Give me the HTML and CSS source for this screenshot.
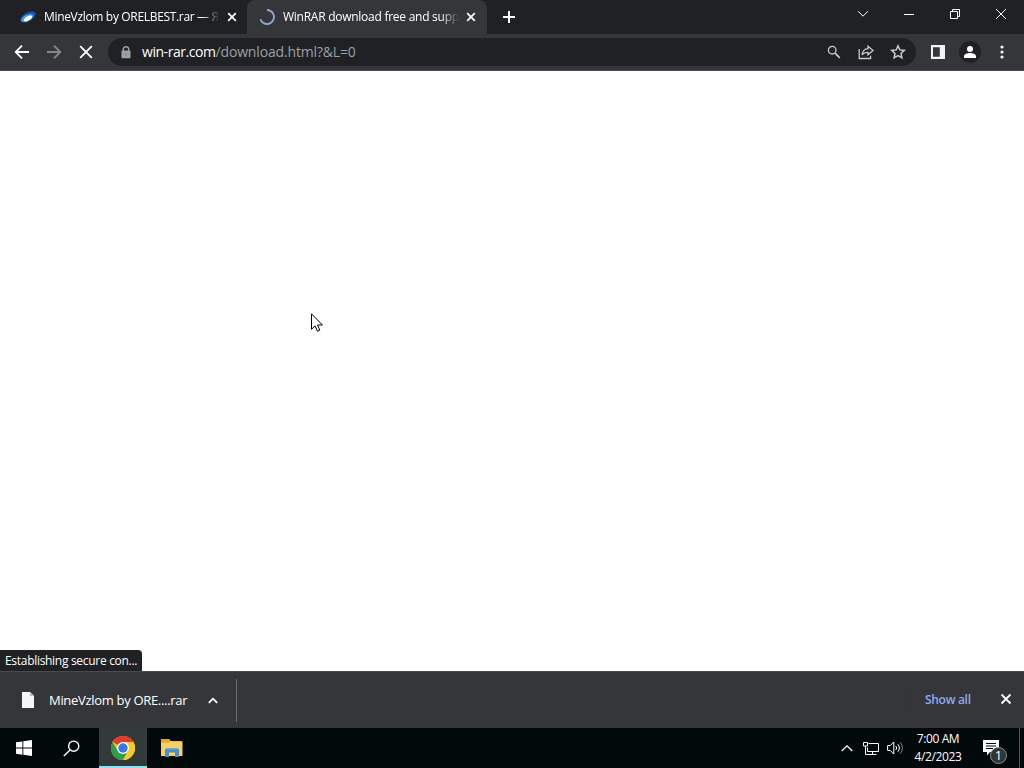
FILE: index.html
```html
<!DOCTYPE html>
<html lang="en">
<head>
  <meta charset="UTF-8">
  <meta name="viewport" content="width=device-width, initial-scale=1.0">
  <title>WinRAR download free and support</title>
  <link rel="stylesheet" href="styles.css">
</head>
<body>

  <div class="tabstrip">
    <div class="tab">
      <svg class="favicon" width="16" height="16" viewBox="0 0 16 16">
        <ellipse cx="8" cy="8" rx="8.3" ry="4.2" fill="#1557b8" transform="rotate(-28 8 8)"/>
        <ellipse cx="7.2" cy="9" rx="6.5" ry="3" fill="#4ba3f5" transform="rotate(-28 7.2 9)"/>
        <ellipse cx="8" cy="9.5" rx="4.6" ry="2" fill="#fff" transform="rotate(-30 8 9.5)"/>
      </svg>
      <span class="tab-title first-title">MineVzlom by ORELBEST.rar — Я</span>
      <svg class="tab-close" width="10" height="10" viewBox="0 0 10 10"><path d="M1.2 1.2l7.6 7.6M8.8 1.2L1.2 8.8"/></svg>
    </div>
    <div class="tab active">
      <svg class="favicon" width="16" height="16" viewBox="0 0 16 16">
        <path d="M8 1a7 7 0 1 1-6.6 9.3" fill="none" stroke="#8ea9d8" stroke-width="1.9"/>
      </svg>
      <span class="tab-title second-title">WinRAR download free and supp</span>
      <svg class="tab-close" width="10" height="10" viewBox="0 0 10 10"><path d="M1.2 1.2l7.6 7.6M8.8 1.2L1.2 8.8"/></svg>
    </div>
    <svg class="new-tab" width="12" height="12" viewBox="0 0 12 12"><path d="M6 0v12M0 6h12"/></svg>
    <div class="window-buttons">
      <div><svg width="12" height="8" viewBox="0 0 12 8"><path d="M1 1.2l5 5 5-5"/></svg></div>
      <div><svg width="10" height="10" viewBox="0 0 10 10"><path d="M0 5.5h10"/></svg></div>
      <div><svg width="10" height="10" viewBox="0 0 10 10"><path d="M.5 2.5h7v7h-7zM2.5 2.5v-2h7v7h-2"/></svg></div>
      <div><svg width="12" height="12" viewBox="0 0 12 12"><path d="M1 1l10 10M11 1L1 11"/></svg></div>
    </div>
  </div>

  <div class="toolbar">
    <div class="nav">
      <svg width="16" height="16" viewBox="0 0 16 16"><path d="M15 8H2M8 1.7L1.7 8 8 14.3"/></svg>
      <svg class="disabled" width="16" height="16" viewBox="0 0 16 16"><path d="M1 8h13M8 1.7L14.3 8 8 14.3"/></svg>
      <svg width="16" height="16" viewBox="0 0 16 16"><path d="M2.2 2.2l11.6 11.6M13.8 2.2L2.2 13.8"/></svg>
    </div>
    <div class="omnibox">
      <svg class="lock" width="10" height="13" viewBox="0 0 10 13">
        <path d="M2.2 5V3.6a2.8 2.8 0 0 1 5.6 0V5" fill="none" stroke="#9aa0a6" stroke-width="1.4"/>
        <rect x="0.5" y="4.6" width="9" height="7.6" rx="1" fill="#9aa0a6"/>
        <circle cx="5" cy="8.4" r="1" fill="#85878b"/>
      </svg>
      <div class="url"><span class="host">win-rar.com</span><span class="path">/download.html?&amp;L=0</span></div>
      <div class="omnibox-icons">
        <svg width="16" height="16" viewBox="0 0 16 16"><circle cx="6.2" cy="6.2" r="3.8"/><path d="M9.1 9.1l4.700 4.700" stroke-width="1.700"/></svg>
        <svg width="16" height="16" viewBox="0 0 16 16"><path d="M1.200 5v9.500h11.400v-2.700M10 2.200l5 4.300-5 4.300V8.300c-3.100 0-4.700.8-6 2.600.5-3.500 2.500-5.900 6-6.200z"/></svg>
        <svg width="16" height="16" viewBox="0 0 16 16"><path stroke-width="1.500" d="M8 1.900l1.800 4 4.500.5-3.300 3 .9 4.400L8 11.500l-3.900 2.300.9-4.400-3.300-3 4.500-.5z"/></svg>
      </div>
    </div>
    <div class="toolbar-icons">
      <svg width="14" height="14" viewBox="0 0 14 14"><path fill="#f1f3f4" fill-rule="evenodd" d="M0 0h14v14H0zM2 2.200v9.600h6.800V2.200z"/></svg>
      <svg width="22" height="22" viewBox="0 0 22 22"><circle cx="11" cy="11" r="11" fill="#202124"/><circle cx="11" cy="8" r="3" fill="#fff"/><path d="M5 17v-1.700C5 13 8.500 12 11 12s6 1 6 3.300V17z" fill="#fff"/></svg>
      <svg width="4" height="14" viewBox="0 0 4 14" fill="#f1f3f4"><circle cx="2" cy="2" r="1.600"/><circle cx="2" cy="7" r="1.600"/><circle cx="2" cy="12" r="1.600"/></svg>
    </div>
  </div>

  <div class="page">
    <div class="status">Establishing secure con...</div>
    <svg class="cursor" width="13" height="20" viewBox="0 0 13 20">
      <path d="M.5.8v15.500l3.600-3.400 2.300 5.300 2.400-1-2.300-5.200h4.900z" fill="#fff" stroke="#000"/>
    </svg>
  </div>

  <div class="shelf">
    <div class="download">
      <svg width="12" height="16" viewBox="0 0 12 16"><path d="M0 0h8l4 4v12H0z" fill="#f4f5f6"/><path d="M8 0v4h4z" fill="#b8bbbe"/></svg>
      <span class="file-name">MineVzlom by ORE....rar</span>
      <svg class="caret" width="10" height="7" viewBox="0 0 10 7"><path d="M.8 5.900L5 1.700l4.200 4.200"/></svg>
    </div>
    <div class="shelf-actions">
      <span class="show-all">Show all</span>
      <svg class="shelf-close" width="12" height="12" viewBox="0 0 12 12"><path d="M1.500 1.500l9 9M10.500 1.500l-9 9"/></svg>
    </div>
  </div>

  <div class="taskbar">
    <div class="task">
      <svg width="16" height="16" viewBox="0 0 16 16" fill="#fff"><path d="M0 2.300l6.400-.9v6.200H0zM7.300 1.200L16 0v7.600H7.300zM0 8.500h6.400v6.200L0 13.800zM7.300 8.500H16V16l-8.700-1.200z"/></svg>
    </div>
    <div class="task">
      <svg width="17" height="17" viewBox="0 0 17 17" fill="none" stroke="#fff" stroke-width="1.400"><circle cx="10.700" cy="6.200" r="5.100"/><path d="M7 9.900L.8 16.100"/></svg>
    </div>
    <div class="task running">
      <svg width="24" height="24" viewBox="0 0 24 24">
        <circle cx="12" cy="12" r="12" fill="#fbc926"/>
        <path d="M12 12L1.600 6A12 12 0 0 1 22.400 6H12z" fill="#e33b2e"/>
        <path d="M1.600 6A12 12 0 0 0 12 24l5.200-9L12 12 6.800 15z" fill="#2f9e4b"/>
        <path d="M12 6H22.400A12 12 0 0 1 12 24l5.200-9z" fill="#fbc926"/>
        <circle cx="12" cy="12" r="6" fill="#fff"/>
        <circle cx="12" cy="12" r="4.700" fill="#3578e5"/>
      </svg>
    </div>
    <div class="task">
      <svg width="22" height="18" viewBox="0 0 22 18">
        <path d="M0 0h8l2 2h11v15H0z" fill="#e5a823"/>
        <path d="M0 3.500h8l1-1h12.500V17H0z" fill="#f6cf68"/>
        <path d="M4 18v-7.500L5.500 9h11l1.500 1.500V18h-4v-4.500H8V18z" fill="#4a8fbd"/>
        <path d="M5.500 9h11l1.200 1.500H4.300z" fill="#6aaed3"/>
      </svg>
    </div>

    <div class="tray">
      <svg class="tray-up" width="12" height="7" viewBox="0 0 12 7"><path d="M.7 6L6 .9 11.300 6"/></svg>
      <svg class="tray-net" width="17" height="15" viewBox="0 0 17 15"><path d="M5.500 2.500h10v8h-11V6.500M9.500 10.500v3M6 13.500h7.500M.5 1.500h4v3.500h-4zM2.500 5v8.500H6"/></svg>
      <svg class="tray-vol" width="16" height="14" viewBox="0 0 16 14"><path d="M.6 4.500h2.700L6.800 1v12L3.300 9.500H.6zM8.800 5a3 3 0 0 1 0 4M10.800 3.200a5.400 5.400 0 0 1 0 7.600"/><path d="M13 1.300a8 8 0 0 1 0 11.400" opacity=".5"/></svg>
      <div class="clock">
        <span class="time">7:00 AM</span>
        <span class="date">4/2/2023</span>
      </div>
      <div class="notifications">
        <svg width="16" height="16" viewBox="0 0 16 16"><path d="M0 0h16v12H7l-3 3.500V12H0z" fill="#fff"/><path d="M3 3.500h10M3 6h10M3 8.500h7" stroke="#02090a"/></svg>
        <span class="badge">1</span>
      </div>
      <div class="show-desktop"></div>
    </div>
  </div>

</body>
</html>
```
FILE: styles.css
```css
* {
  box-sizing: border-box;
}

body {
  margin: 0;
  height: 768px;
  display: flex;
  flex-direction: column;
  overflow: hidden;
  background-color: white;
  color: #fff;
  font-family: "Open Sans", "Noto Sans", sans-serif;
  font-size: 12px;
}

svg {
  display: block;
  flex: none;
}

/* tabs */
.tabstrip {
  height: 34px;
  flex: none;
  display: flex;
  align-items: center;
  background-color: #202124;
}

.tab {
  width: 247px;
  height: 34px;
  padding: 0 10px 0 20px;
  display: flex;
  align-items: center;
}

.tab.active {
  width: 240px;
  padding: 0 11px 0 12px;
  background-color: #35363a;
  border-radius: 8px 8px 0 0;
}

.tab-title {
  width: 176px;
  margin-left: 8px;
  white-space: nowrap;
  line-height: 18px;
  -webkit-mask-image: linear-gradient(to right, #000 calc(100% - 18px), transparent);
  mask-image: linear-gradient(to right, #000 calc(100% - 18px), transparent);
}

.first-title {
  letter-spacing: -0.33px;
}

.second-title {
  letter-spacing: -0.26px;
}

.tab-close {
  margin-left: auto;
  stroke: #fff;
  stroke-width: 1.7;
}

.new-tab {
  margin-left: 16px;
  stroke: #fff;
  stroke-width: 2;
}

.window-buttons {
  margin-left: auto;
  height: 28px;
  display: flex;
  align-self: flex-start;
}

.window-buttons div {
  width: 46px;
  display: flex;
  align-items: center;
  justify-content: center;
}

.window-buttons svg {
  fill: none;
  stroke: #fff;
}

/* toolbar */
.toolbar {
  height: 37px;
  flex: none;
  padding: 0 20px 0 14px;
  display: flex;
  align-items: center;
  background-color: #35363a;
  border-bottom: 1px solid #4a4b4f;
}

.nav {
  display: flex;
  gap: 16px;
}

.nav svg {
  fill: none;
  stroke: #fff;
  stroke-width: 1.8;
}

.nav .disabled {
  stroke: #85878a;
}

.omnibox {
  width: 808px;
  height: 28px;
  margin-left: 14px;
  padding: 0 10px 0 13px;
  display: flex;
  align-items: center;
  background-color: #202124;
  border-radius: 14px;
}

.url {
  margin-left: 11px;
  font-size: 14px;
  line-height: 20px;
  white-space: nowrap;
}

.host {
  letter-spacing: -0.45px;
}

.path {
  color: #9aa0a6;
  letter-spacing: -0.16px;
}

.omnibox-icons {
  margin-left: auto;
  display: flex;
  gap: 16px;
}

.omnibox-icons svg {
  fill: none;
  stroke: #c6c9cc;
  stroke-width: 1.3;
}

.toolbar-icons {
  margin-left: auto;
  display: flex;
  align-items: center;
}

.toolbar-icons svg + svg {
  margin-left: 14px;
}

.toolbar-icons svg:last-child {
  margin-left: 19px;
}

/* page */
.page {
  flex: 1;
  position: relative;
  background-color: #fff;
}

.status {
  position: absolute;
  left: 0;
  bottom: 0;
  width: 142px;
  height: 21px;
  padding-left: 5px;
  background-color: #202124;
  border-radius: 0 4px 0 0;
  letter-spacing: -0.3px;
  line-height: 21px;
  white-space: nowrap;
}

.cursor {
  position: absolute;
  left: 311px;
  top: 242px;
}

/* downloads */
.shelf {
  height: 57px;
  flex: none;
  display: flex;
  align-items: center;
  background-color: #35363a;
  border-top: 1px solid #4a4b4f;
}

.download {
  width: 237px;
  height: 43px;
  padding-left: 22px;
  display: flex;
  align-items: center;
  border-right: 1px solid #6a6b6f;
}

.file-name {
  width: 138px;
  margin-left: 15px;
  font-size: 13px;
  letter-spacing: -0.31px;
  white-space: nowrap;
}

.caret {
  margin-left: 21px;
  fill: none;
  stroke: #fff;
  stroke-width: 1.7;
}

.shelf-actions {
  height: 28px;
  margin-left: auto;
  padding: 0 12px 2px 15px;
  display: flex;
  align-items: center;
  border-left: 1px solid #303135;
}

.show-all {
  width: 46px;
  color: #8ea9f0;
  font-weight: 600;
  letter-spacing: -0.3px;
  white-space: nowrap;
}

.shelf-close {
  margin-left: 29px;
  stroke: #fff;
  stroke-width: 1.8;
}

/* taskbar */
.taskbar {
  height: 40px;
  flex: none;
  display: flex;
  background-color: #02090a;
}

.task {
  width: 48px;
  display: flex;
  align-items: center;
  justify-content: center;
}

.task:nth-child(2) {
  width: 51px;
  padding-right: 4px;
}

.task.running {
  background-color: #333a3b;
  border-bottom: 2px solid #8ae4f2;
  padding-top: 2px;
}

.task:nth-child(4) {
  width: 50px;
}

.tray {
  margin-left: auto;
  display: flex;
  align-items: center;
}

.tray > svg {
  fill: none;
  stroke: #fff;
}

.tray-up {
  stroke-width: 1.3;
}

.tray-net {
  margin-left: 10px;
}

.tray-vol {
  margin-left: 7px;
}

.clock {
  width: 48px;
  margin-left: 11px;
  display: flex;
  flex-direction: column;
  align-items: center;
  line-height: 18px;
  white-space: nowrap;
}

.time,
.date {
  letter-spacing: -0.4px;
}

.notifications {
  position: relative;
  width: 16px;
  margin-left: 21px;
}

.badge {
  position: absolute;
  left: 7px;
  top: 7px;
  width: 17px;
  height: 17px;
  background-color: #303637;
  border: 1px solid #8a8e8f;
  border-radius: 50%;
  font-size: 13px;
  line-height: 15px;
  text-align: center;
}

.show-desktop {
  width: 5px;
  height: 40px;
  margin-left: 20px;
  border-left: 1px solid #4c5557;
}
```
